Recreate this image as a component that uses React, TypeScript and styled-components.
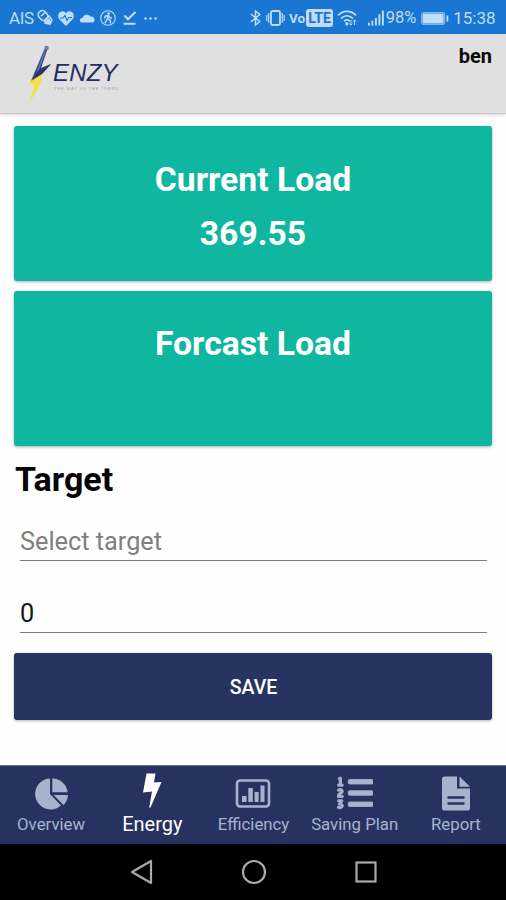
import React from 'react';
import styled, { createGlobalStyle } from 'styled-components';
import { FaListOl } from 'react-icons/fa';

const GlobalStyle = createGlobalStyle`
  * { box-sizing: border-box; }
  html, body { margin: 0; padding: 0; }
  body { font-family: Roboto, "Liberation Sans", sans-serif; background: #fff; }
`;

const Screen = styled.div`
  display: flex;
  flex-direction: column;
  width: 506px;
  height: 900px;
  overflow: hidden;
  background: #fefefe;
`;

const StatusBar = styled.div`
  display: flex;
  flex: none;
  align-items: center;
  justify-content: space-between;
  height: 34px;
  padding: 2px 12px 0 9px;
  background: #1976d2;
  color: #bfddf8;
  line-height: 20px;
`;

const StatusGroup = styled.div`
  display: flex;
  align-items: center;
`;

const StatusText = styled.span<{ $width: number; $spacing?: number; $size?: number }>`
  width: ${(p) => p.$width}px;
  font-size: ${(p) => p.$size ?? 17}px;
  letter-spacing: ${(p) => p.$spacing ?? 0}px;
  white-space: nowrap;
`;

const StatusIcon = styled.svg<{ $gap?: number }>`
  display: block;
  flex: none;
  margin-left: ${(p) => p.$gap ?? 0}px;
  overflow: visible;
`;

const VoLabel = styled.span`
  width: 17px;
  margin-left: 4px;
  font-size: 13.5px;
  font-weight: 700;
`;

const LteBadge = styled.span`
  width: 27px;
  height: 18px;
  border-radius: 3px;
  background: #bfddf8;
  color: #1976d2;
  font-size: 14px;
  font-weight: 700;
  line-height: 18px;
  text-align: center;
`;

const Header = styled.header`
  display: flex;
  flex: none;
  justify-content: space-between;
  height: 80px;
  padding: 9px 14px 0 24px;
  background: #e0e0e0;
  border-bottom: 1px solid #cbcbcb;
  box-shadow: 0 1px 3px rgba(0, 0, 0, 0.16);
`;

const Brand = styled.div`
  display: flex;
`;

const BrandText = styled.div`
  display: flex;
  flex-direction: column;
  padding-top: 16px;
  margin-left: -1px;
`;

const BrandName = styled.span`
  font-family: "Liberation Sans", sans-serif;
  font-size: 24px;
  font-style: italic;
  line-height: 27px;
  letter-spacing: 0.2px;
  color: #252c62;
`;

const BrandTagline = styled.span`
  margin-left: 1px;
  font-family: "Liberation Sans", sans-serif;
  font-size: 4px;
  line-height: 5px;
  letter-spacing: 0.85px;
  color: #a2a2aa;
  white-space: nowrap;
`;

const UserName = styled.span`
  margin-top: 2px;
  font-size: 20px;
  font-weight: 700;
  line-height: 22px;
  color: #0b0b0b;
`;

const Content = styled.main`
  display: flex;
  flex: 1;
  flex-direction: column;
  padding: 12px 14px 0;
`;

const LoadCard = styled.section`
  flex: none;
  height: 155px;
  margin-bottom: 10px;
  padding-top: 27px;
  border-radius: 3px;
  background: #0fb6a0;
  box-shadow: 0 1px 3px rgba(0, 0, 0, 0.32);
  color: #fff;
  text-align: center;

  & + & { padding-top: 26px; }
`;

const CardLine = styled.div`
  height: 54px;
  font-size: 33.7px;
  font-weight: 700;
  line-height: 54px;
`;

const Heading = styled.h1`
  margin: 3px 0 0 1px;
  font-size: 34px;
  font-weight: 700;
  line-height: 40px;
  color: #050505;
`;

const Field = styled.input`
  display: block;
  flex: none;
  width: 467px;
  height: 46px;
  margin: 16px 0 0 6px;
  padding: 7px 0 0;
  border: 0;
  border-bottom: 1.5px solid #7f7f7f;
  border-radius: 0;
  outline: 0;
  background: transparent;
  color: #161616;
  font: 400 25.3px/38px Roboto, sans-serif;

  &::placeholder { color: #7f7f7f; opacity: 1; }
  & + & { margin-top: 26px; }
`;

const SaveButton = styled.button`
  flex: none;
  height: 67px;
  margin-top: 20px;
  padding: 2px 0 0 1px;
  border: 0;
  border-radius: 3px;
  background: #283362;
  box-shadow: 0 1px 3px rgba(0, 0, 0, 0.3);
  color: #fff;
  font: 500 19.5px/24px Roboto, sans-serif;
`;

const TabBar = styled.nav`
  display: grid;
  flex: none;
  grid-template-columns: repeat(5, 1fr);
  height: 79px;
  border-top: 1px solid #66709a;
  background: #283261;
`;

const Tab = styled.div<{ $active?: boolean }>`
  display: flex;
  flex-direction: column;
  align-items: center;
  padding: ${(p) => (p.$active ? 6 : 9)}px 0 0 1px;
  color: ${(p) => (p.$active ? '#ffffff' : '#a9b2cd')};
  font-size: ${(p) => (p.$active ? 20 : 16.8)}px;
  line-height: 22px;
  white-space: nowrap;
`;

const TabIcon = styled.svg`
  display: block;
  width: 40px;
  height: 40px;
  fill: currentColor;
`;

const TabLabel = styled.span<{ $active?: boolean }>`
  margin-top: ${(p) => (p.$active ? 1 : -2)}px;
`;

const NumberedListIcon = styled(FaListOl)`
  width: 36px;
  height: 36px;
  margin: 0 0 4px;
  stroke: currentColor;
  stroke-width: 12px;
`;

const SystemBar = styled.div`
  display: flex;
  flex: none;
  align-items: center;
  justify-content: center;
  gap: 84px;
  height: 56px;
  padding-left: 1px;
  background: #000;

  svg { display: block; fill: none; stroke: #aaa; stroke-width: 2.2; }
`;

const ink = '#bfddf8';

const LeftStatus = () => (
  <StatusGroup>
    <StatusText $width={28} $spacing={-0.3}>AIS</StatusText>
    <StatusIcon width="16" height="18" viewBox="0 0 16 18" fill="none" stroke={ink} strokeWidth="1.6">
      <rect x="2" y="1.5" width="8" height="10" rx="3.5" transform="rotate(-40 6 6.5)" />
      <path d="M4 7l5-4M8 11l4-4 3 4-2 4-5-1z" />
      <path d="M8 13l3 2 4-1-3-5z" fill={ink} stroke="none" />
    </StatusIcon>
    <StatusIcon $gap={5} width="16" height="15" viewBox="0 0 16 15">
      <path d="M8 15L1.3 8.2C-.8 5.5.2 1.2 3.5.5 5.5 0 7.2 1 8 2.5 8.8 1 10.5 0 12.5.5c3.3.7 4.3 5 2.2 7.7z" fill={ink} />
      <path d="M2 7h3l2-2.5 2 5 1.7-3H14" fill="none" stroke="#1976d2" strokeWidth="1.1" />
    </StatusIcon>
    <StatusIcon $gap={5} width="16" height="10" viewBox="0 0 16 10">
      <path d="M2.5 9.5a2.3 2.3 0 0 1 .7-4.5A5 5 0 0 1 11.8 3.500a3.200 3.200 0 0 1 2 6z" fill={ink} />
    </StatusIcon>
    <StatusIcon $gap={5} width="16" height="16" viewBox="0 0 16 16" fill="none" stroke={ink}>
      <circle cx="8" cy="8" r="7.3" strokeWidth="1.1" />
      <circle cx="8.6" cy="3.5" r="1.3" fill={ink} stroke="none" />
      <path d="M8 5.5L7.5 9l-2.7 4M8 8.5l2.2 1.8.4 3M4.5 8.500L5.300 6 8 5.300l2 2.200 2 .6" strokeWidth="1.5" />
    </StatusIcon>
    <StatusIcon $gap={7} width="14" height="14" viewBox="0 0 14 14" fill="none" stroke={ink} strokeWidth="2">
      <path d="M1.5 4.5L5 8.3 12.5 1M.5 12.8h12" />
    </StatusIcon>
    <StatusIcon $gap={7} width="13" height="3" viewBox="0 0 13 3" fill={ink}>
      <circle cx="1.5" cy="1.5" r="1.2" /><circle cx="6.5" cy="1.5" r="1.2" /><circle cx="11.5" cy="1.5" r="1.2" />
    </StatusIcon>
  </StatusGroup>
);

const RightStatus = () => (
  <StatusGroup>
    <StatusIcon width="11" height="16" viewBox="0 0 11 16" fill="none" stroke={ink} strokeWidth="1.5">
      <path d="M.8 4l9 7.5L5.5 15V1l4.3 3.5L.8 12" />
    </StatusIcon>
    <StatusIcon $gap={5} width="19" height="16" viewBox="0 0 19 16" fill="none" stroke={ink} strokeWidth="1.8">
      <rect x="5" y="1" width="9" height="14" rx="1.5" />
      <path d="M2.7 3v10M.8 5v6M16.3 3v10M18.2 5v6" strokeWidth="1.2" />
    </StatusIcon>
    <VoLabel>Vo</VoLabel>
    <LteBadge>LTE</LteBadge>
    <StatusIcon $gap={4} width="20" height="16" viewBox="0 0 20 16" fill="none" stroke={ink} strokeWidth="1.7">
      <path d="M1 5.5C6 0 14 0 19 5.5M4 8.500c3.500-3.700 8.500-3.700 12 0M7 11.300c1.700-1.800 4.300-1.800 6 0" />
      <circle cx="9.8" cy="13.8" r="1.7" fill={ink} stroke="none" />
      <path d="M14 10v5m-1.500-1.500L14 15l1.500-1.500M17.500 15v-5M16 11.500l1.500-1.500 1.500 1.500" strokeWidth="1" />
    </StatusIcon>
    <StatusIcon $gap={11} width="16" height="16" viewBox="0 0 17 16" fill={ink}>
      <path d="M0 13h2v3H0zM3.7 11h2v5h-2zM7.4 8h2v8h-2zM11.1 4h2v12h-2zM14.8 0h2v16h-2z" />
    </StatusIcon>
    <StatusText $width={33} $size={16.5}>&#8202;98%</StatusText>
    <StatusIcon $gap={4} width="28" height="13" viewBox="0 0 28 13">
      <rect x=".6" y=".6" width="23" height="11.8" rx="1.5" fill="none" stroke={ink} strokeWidth="1" opacity=".7" />
      <rect x="1.6" y="1.5" width="21" height="10" fill={ink} />
      <rect x="25.5" y="3.5" width="1.8" height="6" fill={ink} />
    </StatusIcon>
    <StatusText $width={45} $size={17}>&nbsp;15:38</StatusText>
  </StatusGroup>
);

const BoltLogo = () => (
  <svg width="30" height="62" viewBox="0 0 30 62">
    <path d="M20.5 6h3L17 25l10-4-9 10-11 7z" fill="#2e3c79" />
    <path d="M20.5 7L12 30l3-3 7-19z" fill="#5377b9" />
    <circle cx="22.5" cy="5" r="2.3" fill="#7180aa" />
    <path d="M4 40l14-12-2 3 3-1-3 12-10 17 4-17z" fill="#f2e04a" />
    <path d="M7 38l11-12 9-5-9 10z" fill="#28336a" />
  </svg>
);

const PieIcon = () => (
  <TabIcon viewBox="0 0 40 40">
    <path d="M19 3.5V19l11 11.500A15.500 15.500 0 1 1 19 3.500z" />
    <path d="M21.3 3.5A15 15 0 0 1 36.5 17.300H21.300z" />
    <path d="M22.5 20H37a15 15 0 0 1-4.5 10z" />
  </TabIcon>
);

const BoltIcon = () => (
  <TabIcon viewBox="0 0 40 40">
    <path d="M14.500 1.500h9l-1.500 9 7.500-.5L18.500 35.500h-1.300l2.800-16-9 1z" />
  </TabIcon>
);

const ChartIcon = () => (
  <TabIcon viewBox="0 0 40 40">
    <rect x="4" y="5.5" width="32" height="26" rx="3" fill="none" stroke="currentColor" strokeWidth="2.6" />
    <path d="M9 21h4.500v6H9zM15.300 13h4.500v14h-4.500zM21.600 17h4v10h-4zM27.500 10.500h4V27h-4z" />
  </TabIcon>
);

const ReportIcon = () => (
  <TabIcon viewBox="0 0 40 40">
    <path d="M8.500 1.500H21v12h13V33a2.500 2.500 0 0 1-2.500 2.500h-23A2.500 2.500 0 0 1 6 33V4a2.500 2.500 0 0 1 2.500-2.500zM23.500 1.500L34 11.800H23.500z" />
    <path d="M11.5 22.500h17M11.500 28.500h17" stroke="#283261" strokeWidth="2.5" />
  </TabIcon>
);

const tabs = [
  { label: 'Overview', Icon: PieIcon },
  { label: 'Energy', Icon: BoltIcon, active: true },
  { label: 'Efficiency', Icon: ChartIcon },
  { label: 'Saving Plan', Icon: NumberedListIcon },
  { label: 'Report', Icon: ReportIcon },
];

export default function App() {
  return (
    <>
      <GlobalStyle />
      <Screen>
        <StatusBar>
          <LeftStatus />
          <RightStatus />
        </StatusBar>
        <Header>
          <Brand>
            <BoltLogo />
            <BrandText>
              <BrandName>ENZY</BrandName>
              <BrandTagline>THE WAY TO THE TREND</BrandTagline>
            </BrandText>
          </Brand>
          <UserName>ben</UserName>
        </Header>
        <Content>
          <LoadCard>
            <CardLine>Current Load</CardLine>
            <CardLine>369.55</CardLine>
          </LoadCard>
          <LoadCard>
            <CardLine>Forcast Load</CardLine>
          </LoadCard>
          <Heading>Target</Heading>
          <Field placeholder="Select target" />
          <Field defaultValue="0" />
          <SaveButton>SAVE</SaveButton>
        </Content>
        <TabBar>
          {tabs.map(({ label, Icon, active }) => (
            <Tab key={label} $active={active}>
              <Icon />
              <TabLabel $active={active}>{label}</TabLabel>
            </Tab>
          ))}
        </TabBar>
        <SystemBar>
          <svg width="28" height="28" viewBox="0 0 28 28"><path d="M4 14L23 3v22z" strokeLinejoin="round" /></svg>
          <svg width="28" height="28" viewBox="0 0 28 28"><circle cx="14" cy="14" r="11" /></svg>
          <svg width="28" height="28" viewBox="0 0 28 28"><rect x="4.5" y="4.5" width="19" height="19" /></svg>
        </SystemBar>
      </Screen>
    </>
  );
}
